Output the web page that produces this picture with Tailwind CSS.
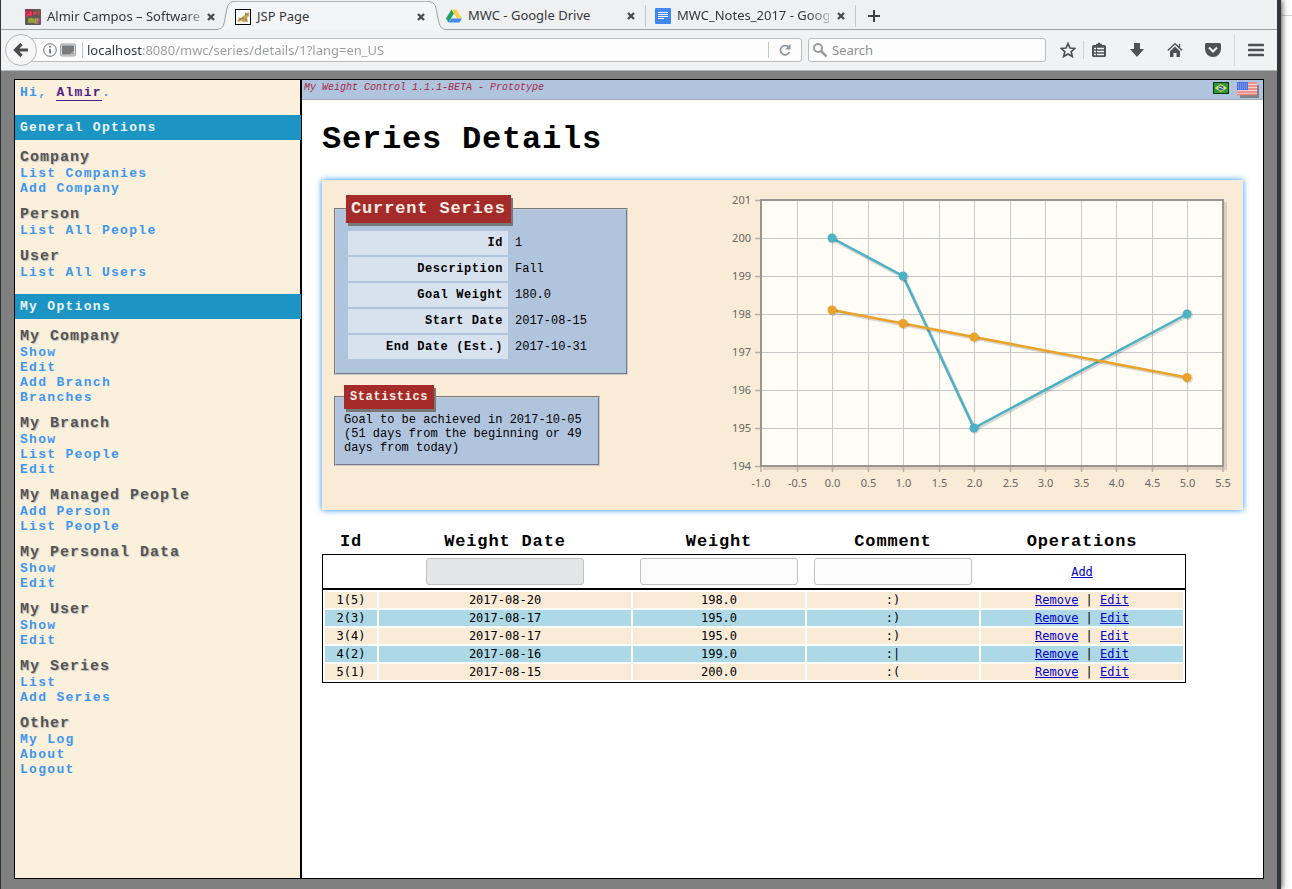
<!DOCTYPE html>
<html lang="en">
<head>
<meta charset="utf-8">
<title>JSP Page</title>
<script src="https://cdn.jsdelivr.net/npm/@tailwindcss/browser@4"></script>
</head>
<body class="flex min-h-screen bg-white font-['Noto_Sans',sans-serif]">
<div class="relative z-10 flex min-w-0 flex-1 flex-col border-l border-r-4 border-[#30373c] bg-[#808080] shadow-[1px_0_6px_#000000b0]">

  <header class="bg-[#eff0f2] text-[13px] text-[#31363b]">
    <div class="flex h-[30px]">
      <div class="flex w-[216px] items-center border-b border-[#9fa2a3] pl-6 pt-1">
        <svg class="mr-[6px] size-4 shrink-0" viewBox="0 0 16 16"><rect width="16" height="16" rx="1" fill="#5d5a52"/><path d="M0 0h8v7H0z" fill="#8a3a4a"/><path d="M1 2q-1 3 1 6M4 3h2v3H3V5h3M9 3v3M9 4h3M13 2q2 2 0 4" stroke="#ff3355" stroke-width="1.3" fill="none"/><path d="M4 14v-4h2v4M6 10h2v4M10 12h3v-2h-3v4h3" stroke="#b9c430" stroke-width="1.2" fill="none"/><path d="M14 9q1 3-1 6" stroke="#d02bd0" stroke-width="1.5" fill="none"/></svg>
        <span class="shrink-0 whitespace-nowrap [mask-image:linear-gradient(to_right,black_90%,#0006)]">Almir Campos – Software</span>
        <button class="ml-auto mr-0 size-3 shrink-0" aria-label="Close tab"><svg viewBox="0 0 12 12"><path d="M3 3l6 6M9 3l-6 6" stroke="#4a4d50" stroke-width="2.4"/></svg></button>
      </div>
      <svg class="h-[30px] w-[18px] shrink-0 overflow-visible" viewBox="0 0 18 30"><path d="M0 29.500C7 29.500 7 24 8.500 16S10 1.500 18 1.500V30H0z" fill="#f4f5f6"/><path d="M-1 29.500C7 29.500 7 24 8.500 16S10 1.500 18 1.500" fill="none" stroke="#9fa2a3"/></svg>
      <div class="mt-px flex w-[193px] items-center border-t border-[#b4b7b9] bg-[#f4f5f6] pt-px">
        <svg class="mr-[6px] size-4 shrink-0" viewBox="0 0 16 16"><rect x=".5" y=".5" width="15" height="15" fill="#fff" stroke="#000"/><path d="M2 12l2-2-1-2 3 1 2-2 2-1V3l2 1 2-1v4l-2 2 1 4H9l-3-1-2 1z" fill="#c9a45c"/><path d="M4 11l3-2 2 1M10 6l3-1M11 9v3" stroke="#8b7040" fill="none"/></svg>
        <span class="flex-1">JSP Page</span>
        <button class="mr-px size-3" aria-label="Close tab"><svg viewBox="0 0 12 12"><path d="M3 3l6 6M9 3l-6 6" stroke="#4a4d50" stroke-width="2.4"/></svg></button>
      </div>
      <svg class="h-[30px] w-[17px] shrink-0 overflow-visible" viewBox="0 0 17 30"><path d="M0 1.500C8 1.500 8 8 9.500 16S12 29.500 18 29.500V30H0z" fill="#f4f5f6"/><path d="M0 1.500C8 1.500 8 8 9.500 16S12 29.500 18 29.500" fill="none" stroke="#9fa2a3"/></svg>
      <div class="flex flex-1 border-b border-[#9fa2a3]">
        <div class="mb-[2px] mt-[5px] flex w-[201px] items-center border-r border-[#c4c6c8] pl-px">
          <svg class="mr-[6px] size-4 shrink-0" viewBox="0 0 16 16"><path d="M5.500 1.500L0 10.500l2.500 4L8 5.500z" fill="#1da462"/><path d="M5.500 1.500h5L16 10.500h-5z" fill="#ffd04b"/><path d="M5.500 10.500H16l-2.500 4h-11z" fill="#4688f4"/></svg>
          <span class="flex-1">MWC - Google Drive</span>
          <button class="mr-2 size-3" aria-label="Close tab"><svg viewBox="0 0 12 12"><path d="M3 3l6 6M9 3l-6 6" stroke="#4a4d50" stroke-width="2.4"/></svg></button>
        </div>
        <div class="mb-[2px] mt-[5px] flex w-[210px] items-center border-r border-[#c4c6c8] pl-[9px]">
          <svg class="mr-[6px] size-4 shrink-0" viewBox="0 0 16 16"><rect width="16" height="16" rx="1" fill="#4285f4"/><path d="M3 4.500h10M3 6.500h10M3 8.500h10M3 10.500h6" stroke="#fff"/></svg>
          <span class="w-[152px] overflow-hidden whitespace-nowrap [mask-image:linear-gradient(to_right,black_86%,#0004)]">MWC_Notes_2017 - Google Docs</span>
          <button class="ml-[6px] size-3" aria-label="Close tab"><svg viewBox="0 0 12 12"><path d="M3 3l6 6M9 3l-6 6" stroke="#4a4d50" stroke-width="2.4"/></svg></button>
        </div>
        <button class="ml-3 mt-[10px] size-3" aria-label="New tab"><svg viewBox="0 0 12 12"><path d="M6 0v12M0 6h12" stroke="#3c4043" stroke-width="2"/></svg></button>
      </div>
    </div>

    <div class="flex h-[41px] items-center border-b border-[#b6b7b8] bg-[#f1f2f4] pl-1 pr-[13px]">
      <button class="z-10 grid size-8 shrink-0 place-items-center rounded-full border border-[#b5b7b9] bg-[#f6f6f7]" aria-label="Back"><svg class="size-4" viewBox="0 0 16 16"><path d="M8.500 2L2.500 8l6 6M3 8h12" fill="none" stroke="#4a4d50" stroke-width="3.200"/></svg></button>
      <div class="-ml-2 flex h-6 flex-1 items-center rounded-[3px] border border-[#b9bbbd] bg-[#fcfcfc] pl-[13px]">
        <svg class="size-[14px] shrink-0" viewBox="0 0 14 14"><circle cx="7" cy="7" r="6.300" fill="none" stroke="#6b6e70"/><path d="M7 6v4.500M7 3v1.600" stroke="#55585a" stroke-width="1.500"/></svg>
        <svg class="ml-[3px] h-[14px] w-4 shrink-0" viewBox="0 0 16 14"><rect x=".5" y="1" width="15" height="12" rx="1" fill="#d9dbdc" stroke="#a0a3a5"/><path d="M2 2.500h12v5l-4 4H2z" fill="#777b7d"/><path d="M14 8v3.500h-4z" fill="#9b9ea0"/></svg>
        <span class="ml-[6px] h-4 w-px bg-[#c4c6c8]"></span>
        <input aria-label="Address" value="localhost:8080/mwc/series/details/1?lang=en_US" class="h-[22px] min-w-0 flex-1 bg-[linear-gradient(to_right,#31363b_59px,#999b9d_59px)] bg-clip-text pl-1 text-transparent">
        <span class="h-4 w-px bg-[#c4c6c8]"></span>
        <button class="mx-[10px] size-3" aria-label="Reload"><svg viewBox="0 0 12 12"><path d="M9.500 3.200A4.600 4.600 0 1 0 10.300 8" fill="none" stroke="#8b97a3" stroke-width="1.800"/><path d="M11.500 0v5.500H6z" fill="#8b97a3"/></svg></button>
      </div>
      <div class="ml-[6px] flex h-6 w-[238px] items-center rounded-[3px] border border-[#b9bbbd] bg-[#fcfcfc] pl-1">
        <svg class="size-[14px] shrink-0" viewBox="0 0 14 14"><circle cx="5" cy="5" r="4" fill="none" stroke="#999b9d" stroke-width="2"/><path d="M8 8l5.500 5.500" stroke="#999b9d" stroke-width="2.500"/></svg>
        <input aria-label="Search" placeholder="Search" class="ml-[5px] h-[22px] min-w-0 flex-1 bg-transparent placeholder:text-[#8f9193]">
      </div>
      <button class="ml-[14px] size-4" aria-label="Bookmark"><svg viewBox="0 0 16 16"><path d="M8 1.500l2 4.500 4.800.5-3.600 3.200 1.100 4.800L8 12l-4.300 2.500 1.100-4.800L1.200 6.500 6 6z" fill="none" stroke="#4f5254" stroke-width="1.700"/></svg></button>
      <span class="ml-[7px] h-[18px] w-px bg-[#d0d2d4]"></span>
      <button class="ml-[7px] size-4" aria-label="Bookmarks list"><svg viewBox="0 0 16 16"><path d="M5 2h1.500a1.500 1.500 0 0 1 3 0H11v1h2.500l1.500 1v10l-1 1H2l-1-1V4l1.500-1H5z" fill="#4f5254"/><path d="M3 6.500h2M6 6.500h7M3 9.500h2M6 9.500h7M3 12.500h2M6 12.500h7" stroke="#f1f2f4" stroke-width="1.600"/></svg></button>
      <button class="ml-[22px] size-4" aria-label="Downloads"><svg viewBox="0 0 16 16"><path d="M5 1h6v6h4l-7 8-7-8h4z" fill="#4f5254"/></svg></button>
      <button class="ml-[22px] size-4" aria-label="Home"><svg viewBox="0 0 16 16"><path d="M.800 8.500L8 1.800l7.200 6.700M12.500 2v3" fill="none" stroke="#4f5254" stroke-width="1.400"/><path d="M3 9.200L8 4.600l5 4.600V15H9.500v-4h-3v4H3z" fill="#4f5254"/></svg></button>
      <button class="ml-[22px] size-4" aria-label="Pocket"><svg viewBox="0 0 16 16"><path d="M1.500 1h13A1.500 1.500 0 0 1 16 2.500V7A8 8 0 0 1 0 7V2.500A1.500 1.500 0 0 1 1.500 1z" fill="#4f5254"/><path d="M4 5.500l4 4 4-4" fill="none" stroke="#f1f2f4" stroke-width="2"/></svg></button>
      <span class="ml-[13px] h-8 w-px bg-[#d6d8da]"></span>
      <button class="ml-[13px] size-4" aria-label="Menu"><svg viewBox="0 0 16 16"><path d="M1 3h14M1 8h14M1 13h14" stroke="#4f5254" stroke-width="2.600" stroke-linecap="round"/></svg></button>
    </div>
  </header>

  <div class="mx-[13px] mb-[10px] mt-2 flex flex-1 border border-black bg-white font-['Liberation_Mono',monospace]">
    <nav class="w-[287px] shrink-0 border-r-2 border-black bg-[#faf0dc] text-[13px] font-bold leading-[15px] tracking-widest text-[#3d96f0]">
      <p class="pb-[15px] pl-[5px] pt-[5px]">Hi, <a href="#" class="border-b border-[#551a8b] text-[#551a8b]">Almir</a>.</p>
      <h2 class="-mr-px h-[25px] bg-[#1c94c4] pl-[5px] pt-[5px] text-[#eaf5f7]">General Options</h2>
      <div class="flex flex-col gap-[11px] pb-[14px] pl-[5px] pt-[10px]">
        <section><h3 class="text-[15px] leading-4 tracking-[1px] text-[#555] text-shadow-[1px_1px_1px_#bbb]">Company</h3><ul><li><a href="#">List Companies</a></li><li><a href="#">Add Company</a></li></ul></section>
        <section><h3 class="text-[15px] leading-4 tracking-[1px] text-[#555] text-shadow-[1px_1px_1px_#bbb]">Person</h3><ul><li><a href="#">List All People</a></li></ul></section>
        <section><h3 class="text-[15px] leading-4 tracking-[1px] text-[#555] text-shadow-[1px_1px_1px_#bbb]">User</h3><ul><li><a href="#">List All Users</a></li></ul></section>
      </div>
      <h2 class="-mr-px h-[25px] bg-[#1c94c4] pl-[5px] pt-[5px] text-[#eaf5f7]">My Options</h2>
      <div class="flex flex-col gap-[11px] pl-[5px] pt-[10px]">
        <section><h3 class="text-[15px] leading-4 tracking-[1px] text-[#555] text-shadow-[1px_1px_1px_#bbb]">My Company</h3><ul><li><a href="#">Show</a></li><li><a href="#">Edit</a></li><li><a href="#">Add Branch</a></li><li><a href="#">Branches</a></li></ul></section>
        <section><h3 class="text-[15px] leading-4 tracking-[1px] text-[#555] text-shadow-[1px_1px_1px_#bbb]">My Branch</h3><ul><li><a href="#">Show</a></li><li><a href="#">List People</a></li><li><a href="#">Edit</a></li></ul></section>
        <section><h3 class="text-[15px] leading-4 tracking-[1px] text-[#555] text-shadow-[1px_1px_1px_#bbb]">My Managed People</h3><ul><li><a href="#">Add Person</a></li><li><a href="#">List People</a></li></ul></section>
        <section><h3 class="text-[15px] leading-4 tracking-[1px] text-[#555] text-shadow-[1px_1px_1px_#bbb]">My Personal Data</h3><ul><li><a href="#">Show</a></li><li><a href="#">Edit</a></li></ul></section>
        <section><h3 class="text-[15px] leading-4 tracking-[1px] text-[#555] text-shadow-[1px_1px_1px_#bbb]">My User</h3><ul><li><a href="#">Show</a></li><li><a href="#">Edit</a></li></ul></section>
        <section><h3 class="text-[15px] leading-4 tracking-[1px] text-[#555] text-shadow-[1px_1px_1px_#bbb]">My Series</h3><ul><li><a href="#">List</a></li><li><a href="#">Add Series</a></li></ul></section>
        <section><h3 class="text-[15px] leading-4 tracking-[1px] text-[#555] text-shadow-[1px_1px_1px_#bbb]">Other</h3><ul><li><a href="#">My Log</a></li><li><a href="#">About</a></li><li><a href="#">Logout</a></li></ul></section>
      </div>
    </nav>

    <main class="min-w-0 flex-1">
      <div class="flex h-5 justify-between border-b border-[#a3a9b1] bg-[#b0c4de] pl-[2px] pr-1">
        <p class="pt-[2px] text-[10px] italic leading-3 text-[#a52a4a]">My Weight Control 1.1.1-BETA - Prototype</p>
        <div class="flex gap-2 pt-[2px]">
          <button class="h-3 w-4" aria-label="Português"><svg viewBox="0 0 16 12"><rect x=".5" y=".5" width="15" height="11" fill="#2f9a3a" stroke="#06300a"/><path d="M8 2l6 4-6 4-6-4z" fill="#f5ec3a"/><circle cx="8" cy="6" r="2.600" fill="#2e5ec4"/><path d="M6 5.300q2 0 4 1.500" stroke="#cfe0ff" fill="none"/></svg></button>
          <button class="h-[14px] w-[22px]" aria-label="English"><svg class="overflow-visible" viewBox="0 0 22 14"><rect x="3" y="3" width="19" height="13" fill="#7d828a"/><rect width="20" height="13" fill="#f6d3cf"/><path d="M0 1h20M0 4h20M0 7h20M0 10h20M0 12.500h20" stroke="#ea7f78" stroke-width="1.300"/><rect width="11" height="8" fill="#4a72e0"/><path d="M1 2h9M1 4h9M1 6h9" stroke="#a8bdf5" stroke-dasharray="1 1"/></svg></button>
        </div>
      </div>
      <div class="px-5 pt-[22px]">
        <h1 class="text-[32px] font-bold leading-9 tracking-wide">Series Details</h1>
        <div class="mt-[22px] flex justify-between bg-[#faebd7] px-3 shadow-[0_0_6px_#1e90ff]">
          <div class="pb-[44px] pt-[15px] text-[12px]">
            <fieldset class="w-[294px] border-2 border-[#c8ccd0] bg-[#b0c4de] px-[10px] pb-3 pt-[6px] [border-style:groove]">
              <legend class="h-7 bg-[#a52a2a] px-[5px] text-[17px] font-bold leading-7 tracking-wider text-[#faf0e6] shadow-[2px_3px_0_#777]">Current Series</legend>
              <table class="border-separate border-spacing-[2px]">
                <tbody>
                  <tr class="h-6"><th scope="row" class="w-[160px] bg-white/50 pr-[5px] text-right tracking-wider">Id</th><td class="pl-[5px]">1</td></tr>
                  <tr class="h-6"><th scope="row" class="w-[160px] bg-white/50 pr-[5px] text-right tracking-wider">Description</th><td class="pl-[5px]">Fall</td></tr>
                  <tr class="h-6"><th scope="row" class="w-[160px] bg-white/50 pr-[5px] text-right tracking-wider">Goal Weight</th><td class="pl-[5px]">180.0</td></tr>
                  <tr class="h-6"><th scope="row" class="w-[160px] bg-white/50 pr-[5px] text-right tracking-wider">Start Date</th><td class="pl-[5px]">2017-08-15</td></tr>
                  <tr class="h-6"><th scope="row" class="w-[160px] bg-white/50 pr-[5px] text-right tracking-wider">End Date (Est.)</th><td class="pl-[5px]">2017-10-31</td></tr>
                </tbody>
              </table>
            </fieldset>
            <fieldset class="mt-[10px] w-[266px] border-2 border-[#c8ccd0] bg-[#b0c4de] px-2 pb-[9px] pt-1 [border-style:groove]">
              <legend class="h-6 bg-[#a52a2a] px-[6px] font-bold leading-6 tracking-wider text-[#faf0e6] shadow-[2px_3px_0_#777]">Statistics</legend>
              <p class="leading-[14px]">Goal to be achieved in 2017-10-05 (51 days from the beginning or 49 days from today)</p>
            </fieldset>
          </div>
          <svg class="mt-[10px] h-[310px] w-[510px] shrink-0 overflow-visible font-['Noto_Sans',sans-serif] text-[11px]" viewBox="0 0 510 310">
            <path d="M42 277.500h461.500V12" fill="none" stroke="#000" stroke-opacity=".12" stroke-width="5"/>
            <rect x="40" y="10" width="462" height="266" fill="#fffdf6"/>
            <path id="grid" fill="none" stroke="#c8c8c6"/>
            <path id="ticks" fill="none" stroke="#b5b0a8" stroke-width="1.500"/>
            <rect x="40" y="10" width="462" height="266" fill="none" stroke="#999691" stroke-width="2"/>
            <g fill="none" stroke-linejoin="round">
              <path d="M112 49.500L183 87.500L254 239.500L467 125.500" stroke="#000" stroke-opacity=".15" stroke-width="3.500"/>
              <path d="M111 48L182 86L253 238L466 124" stroke="#4bb2c5" stroke-width="2.500"/>
              <path d="M112 121.500L183 135L254 148.500L467 189" stroke="#000" stroke-opacity=".15" stroke-width="3"/>
              <path d="M111 120L182 133.500L253 147L466 187.500" stroke="#eaa228" stroke-width="2.500"/>
            </g>
            <g fill="#000" fill-opacity=".13"><circle cx="112" cy="49" r="5"/><circle cx="183" cy="87" r="5"/><circle cx="254" cy="239" r="5"/><circle cx="467" cy="125" r="5"/><circle cx="112" cy="121" r="5"/><circle cx="183" cy="134.500" r="5"/><circle cx="254" cy="148" r="5"/><circle cx="467" cy="188.500" r="5"/></g>
            <g fill="#4bb2c5"><circle cx="111" cy="48" r="4.500"/><circle cx="182" cy="86" r="4.500"/><circle cx="253" cy="238" r="4.500"/><circle cx="466" cy="124" r="4.500"/></g>
            <g fill="#eaa228"><circle cx="111" cy="120" r="4.500"/><circle cx="182" cy="133.500" r="4.500"/><circle cx="253" cy="147" r="4.500"/><circle cx="466" cy="187.500" r="4.500"/></g>
            <g id="labels" fill="#666"></g>
          </svg>
        </div>

        <table class="mt-[21px] block w-[864px] text-center font-['DejaVu_Sans_Mono',monospace] text-[12px]">
          <thead class="block">
            <tr class="grid grid-cols-[52fr_252fr_172fr_172fr_202fr] gap-[2px] px-[3px] pb-px font-['Liberation_Mono',monospace] text-[17px] leading-[22px] tracking-wider">
              <th>Id</th><th>Weight Date</th><th>Weight</th><th>Comment</th><th>Operations</th>
            </tr>
            <tr class="grid grid-cols-[52fr_252fr_172fr_172fr_202fr] items-center gap-[2px] border border-black px-[2px] py-[3px]">
              <td></td>
              <td><input aria-label="Weight date" disabled class="mx-auto block h-[27px] w-[158px] rounded-[3px] border border-[#c0c2c3] bg-[#e4e5e7]"></td>
              <td><input aria-label="Weight" class="mx-auto block h-[27px] w-[158px] rounded-[3px] border border-[#c0c2c3] bg-[#fcfcfc]"></td>
              <td><input aria-label="Comment" class="mx-auto block h-[27px] w-[158px] rounded-[3px] border border-[#c0c2c3] bg-[#fcfcfc]"></td>
              <td><a href="#" class="text-[#0000cc] underline">Add</a></td>
            </tr>
          </thead>
          <tbody id="rows" class="flex flex-col gap-[2px] border border-black p-[2px] leading-4"></tbody>
        </table>
      </div>
    </main>
  </div>
</div>
<aside class="w-[11px] shrink-0 bg-white pt-[15px]"><div class="h-px bg-[#d5d5d5]"></div></aside>

<script>
const rows = [['1(5)','2017-08-20','198.0',':)'],['2(3)','2017-08-17','195.0',':)'],['3(4)','2017-08-17','195.0',':)'],['4(2)','2017-08-16','199.0',':|'],['5(1)','2017-08-15','200.0',':(']];
document.getElementById('rows').innerHTML = rows.map((r, i) =>
  `<tr class="grid grid-cols-[52fr_252fr_172fr_172fr_202fr] gap-[2px]">` +
  [...r, '<a href="#" class="text-[#0000cc] underline">Remove</a> | <a href="#" class="text-[#0000cc] underline">Edit</a>']
    .map(c => i % 2 ? `<td class="bg-[#add8e6]">${c}</td>` : `<td class="bg-[#faebd7]">${c}</td>`).join('') + '</tr>').join('');

let grid = '', ticks = '', labels = '';
for (let i = 0; i <= 13; i++) {
  const x = Math.round(40 + i * 462 / 13) + (i % 13 ? .5 : 0);
  if (i % 13) grid += `M${x} 11V275`;
  ticks += `M${x} 277v5`;
  labels += `<text x="${x}" y="297" text-anchor="middle">${(-1 + i * .5).toFixed(1)}</text>`;
}
for (let j = 0; j <= 7; j++) {
  const y = 10 + j * 38 + .5;
  if (j % 7) grid += `M41 ${y}H501`;
  ticks += `M39 ${y}h-5`;
  labels += `<text x="30" y="${14 + j * 38}" text-anchor="end">${201 - j}</text>`;
}
document.getElementById('grid').setAttribute('d', grid);
document.getElementById('ticks').setAttribute('d', ticks);
document.getElementById('labels').innerHTML = labels;
</script>
</body>
</html>
